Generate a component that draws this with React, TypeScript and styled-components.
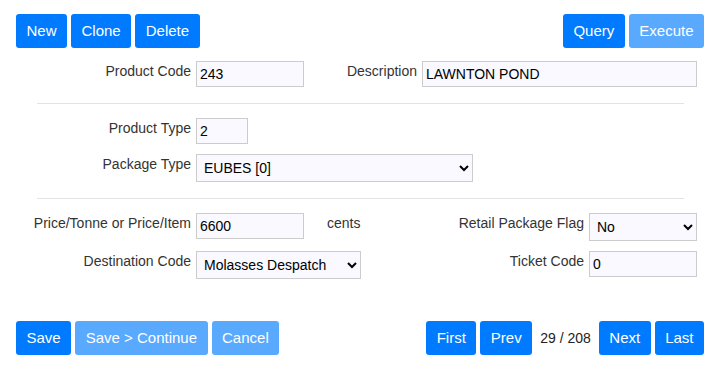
import styled, { createGlobalStyle } from "styled-components";

const GlobalStyle = createGlobalStyle`
    body {
        margin: 0;
        background: #fff;
        font-family: "Liberation Sans", Arial, sans-serif;
        font-size: 14px;
        color: #333;
    }
`;

const ProductForm = () => {
    return (
        <>
            <GlobalStyle />
            <Page>
                <Toolbar>
                    <ButtonGroup>
                        <Button>New</Button>
                        <Button>Clone</Button>
                        <Button>Delete</Button>
                    </ButtonGroup>
                    <ButtonGroup>
                        <Button>Query</Button>
                        <Button disabled>Execute</Button>
                    </ButtonGroup>
                </Toolbar>

                <Form>
                    <Row>
                        <FieldLabel width={175}>Product Code</FieldLabel>
                        <Input width={108} defaultValue="243" />
                        <FieldLabel width={113}>Description</FieldLabel>
                        <Input width={277} defaultValue="LAWNTON POND" />
                    </Row>
                    <Divider />
                    <Row>
                        <FieldLabel width={175}>Product Type</FieldLabel>
                        <Input width={52} defaultValue="2" />
                    </Row>
                    <Row>
                        <FieldLabel width={175}>Package Type</FieldLabel>
                        <Select width={277} defaultValue="EUBES">
                            <option value="EUBES">EUBES [0]</option>
                        </Select>
                    </Row>
                    <Divider />
                    <Row>
                        <FieldLabel width={175}>Price/Tonne or Price/Item</FieldLabel>
                        <Input width={108} defaultValue="6600" />
                        <Unit>cents</Unit>
                        <FieldLabel grow>Retail Package Flag</FieldLabel>
                        <Select width={108} defaultValue="No">
                            <option value="No">No</option>
                            <option value="Yes">Yes</option>
                        </Select>
                    </Row>
                    <Row>
                        <FieldLabel width={175}>Destination Code</FieldLabel>
                        <Select width={165} defaultValue="MD">
                            <option value="MD">Molasses Despatch</option>
                        </Select>
                        <FieldLabel grow>Ticket Code</FieldLabel>
                        <Input width={108} defaultValue="0" />
                    </Row>
                </Form>

                <Footer>
                    <ButtonGroup>
                        <Button>Save</Button>
                        <Button disabled>Save &gt; Continue</Button>
                        <Button disabled>Cancel</Button>
                    </ButtonGroup>
                    <ButtonGroup>
                        <Button>First</Button>
                        <Button>Prev</Button>
                        <PageCount>29 / 208</PageCount>
                        <Button>Next</Button>
                        <Button>Last</Button>
                    </ButtonGroup>
                </Footer>
            </Page>
        </>
    );
};

const Page = styled.div`
    width: 720px;
    box-sizing: border-box;
    padding: 14px 16px 0 16px;
`;

const Toolbar = styled.div`
    display: flex;
    justify-content: space-between;
    align-items: center;
`;

const Footer = styled(Toolbar)`
    margin-top: 42px;
`;

const ButtonGroup = styled.div`
    display: flex;
    align-items: center;
    gap: 4px;
`;

const Button = styled.button`
    height: 34px;
    padding: 0 10.5px;
    border: none;
    border-radius: 3px;
    background: #007bff;
    color: #fff;
    font-family: "Liberation Sans", Arial, sans-serif;
    font-size: 15px;
    line-height: 20px;
    cursor: pointer;
    &:disabled {
        background: #59a9ff;
        cursor: default;
    }
`;

const PageCount = styled.span`
    margin: 0 4px;
    font-size: 14px;
    color: #222;
`;

const Form = styled.div`
    display: flex;
    flex-direction: column;
    gap: 10px;
    margin-top: 13px;
    padding-right: 7px;
`;

const Row = styled.div`
    display: flex;
    align-items: flex-start;
`;

const FieldLabel = styled.label<{ width?: number; grow?: boolean }>`
    flex: ${p => (p.grow ? "1" : "none")};
    width: ${p => (p.width ? `${p.width}px` : "auto")};
    margin-right: 5px;
    text-align: right;
    font-size: 14px;
    line-height: 20px;
    color: #333;
    white-space: nowrap;
`;

const Unit = styled.span`
    margin-left: 23px;
    font-size: 14px;
    line-height: 20px;
    color: #333;
`;

const Input = styled.input<{ width: number }>`
    width: ${p => p.width}px;
    height: 26px;
    box-sizing: border-box;
    padding: 0 3px;
    border: 1px solid #ccc;
    border-radius: 0;
    background: #f9f9ff;
    font-family: "Liberation Sans", Arial, sans-serif;
    font-size: 14px;
    color: #000;
    outline: none;
`;

const Select = styled.select<{ width: number }>`
    width: ${p => p.width}px;
    height: 28px;
    box-sizing: border-box;
    padding: 0 3px;
    border: 1px solid #ccc;
    border-radius: 0;
    background: #f9f9ff;
    font-family: "Liberation Sans", Arial, sans-serif;
    font-size: 14px;
    color: #000;
    outline: none;
`;

const Divider = styled.hr`
    margin: 6px 13px 4px 21px;
    border: none;
    border-top: 1px solid #e3e3e3;
`;

export default ProductForm;
